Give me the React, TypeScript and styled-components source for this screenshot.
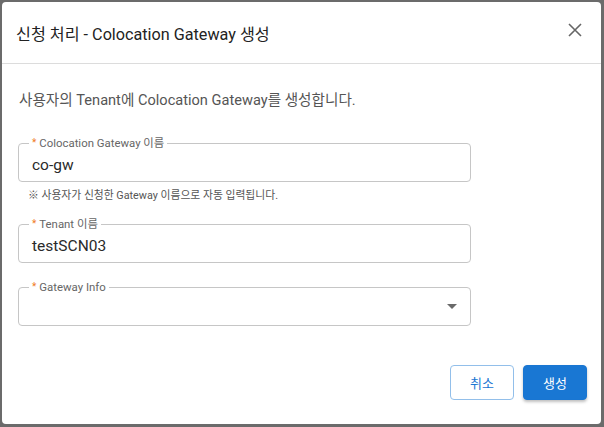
import React from "react";
import styled, { createGlobalStyle } from "styled-components";

const Global = createGlobalStyle`
  html, body { margin: 0; padding: 0; background: #6b6b6b; }
  body { font-family: Roboto, "Noto Sans CJK KR", sans-serif; }
  * { box-sizing: border-box; }
`;

const Backdrop = styled.div`
  width: 604px;
  height: 427px;
  padding: 2px 3px 3px 2px;
  background: #6b6b6b;
`;

const Dialog = styled.div`
  width: 599px;
  height: 422px;
  background: #fff;
  border-radius: 4px;
  display: flex;
  flex-direction: column;
`;

const Header = styled.div`
  height: 62px;
  display: flex;
  align-items: center;
  justify-content: space-between;
  padding: 0 14px 0 14px;
  border-bottom: 1px solid #dcdcdc;
`;

const Title = styled.h2`
  margin: 0;
  font-size: 16.2px;
  font-weight: 400;
  color: #222;
`;

const CloseButton = styled.button`
  width: 24px;
  height: 24px;
  padding: 0;
  border: none;
  background: none;
  display: flex;
  align-items: center;
  justify-content: center;
  margin-top: -6px;
`;

const Body = styled.div`
  flex: 1;
  padding: 26px 16px 0 16px;
  display: flex;
  flex-direction: column;
`;

const Description = styled.p`
  margin: 0 0 0 1px;
  font-size: 14.6px;
  line-height: 20px;
  color: #555;
`;

const FieldBox = styled.div<{ $top: number }>`
  margin-top: ${(p) => p.$top}px;
  width: 453px;
  height: 39px;
  padding: 4px 13px 0 13px;
  border: 1px solid #c6c6c6;
  border-radius: 4px;
  position: relative;
  display: flex;
  align-items: center;
`;

const Label = styled.span`
  position: absolute;
  left: 10px;
  top: -7px;
  padding: 0 3px;
  background: #fff;
  font-size: 11.4px;
  line-height: 12px;
  color: #666;
  white-space: nowrap;
`;

const Star = styled.span`
  color: #f07a23;
  font-size: 10px;
  margin-right: 3px;
  position: relative;
  top: -1px;
`;

const Value = styled.span`
  font-size: 15.5px;
  color: #2a2a2a;
`;

const Arrow = styled.span`
  position: absolute;
  right: 13px;
  top: 16px;
  width: 0;
  height: 0;
  border-left: 5px solid transparent;
  border-right: 5px solid transparent;
  border-top: 5px solid #6a6a6a;
`;

const Helper = styled.div`
  margin: 7px 0 0 10px;
  font-size: 10.8px;
  line-height: 14px;
  color: #555;
`;

const Footer = styled.div`
  display: flex;
  justify-content: flex-end;
  gap: 9px;
  padding: 0 14px 24px 0;
`;

const Button = styled.button<{ $primary?: boolean }>`
  height: 35px;
  width: ${(p) => (p.$primary ? 64 : 64)}px;
  padding: 0;
  border-radius: 4px;
  font-family: Roboto, "Noto Sans CJK KR", sans-serif;
  font-size: 13px;
  border: 1px solid ${(p) => (p.$primary ? "#1976d2" : "#92bfea")};
  background: ${(p) => (p.$primary ? "#1977d3" : "#fff")};
  color: ${(p) => (p.$primary ? "#fff" : "#1976d2")};
  box-shadow: ${(p) => (p.$primary ? "0 2px 3px rgba(0,0,0,0.25)" : "none")};
`;

export default function App() {
  return (
    <Backdrop>
      <Global />
      <Dialog>
        <Header>
          <Title>신청 처리 - Colocation Gateway 생성</Title>
          <CloseButton aria-label="닫기">
            <svg width="14" height="14" viewBox="0 0 14 14">
              <path d="M1 1L13 13M13 1L1 13" stroke="#666" strokeWidth="1.6" />
            </svg>
          </CloseButton>
        </Header>
        <Body>
          <Description>사용자의 Tenant에 Colocation Gateway를 생성합니다.</Description>
          <FieldBox $top={33}>
            <Label>
              <Star>*</Star>Colocation Gateway 이름
            </Label>
            <Value>co-gw</Value>
          </FieldBox>
          <Helper>※ 사용자가 신청한 Gateway 이름으로 자동 입력됩니다.</Helper>
          <FieldBox $top={21}>
            <Label>
              <Star>*</Star>Tenant 이름
            </Label>
            <Value>testSCN03</Value>
          </FieldBox>
          <FieldBox $top={24}>
            <Label>
              <Star>*</Star>Gateway Info
            </Label>
            <Arrow />
          </FieldBox>
        </Body>
        <Footer>
          <Button>취소</Button>
          <Button $primary>생성</Button>
        </Footer>
      </Dialog>
    </Backdrop>
  );
}
